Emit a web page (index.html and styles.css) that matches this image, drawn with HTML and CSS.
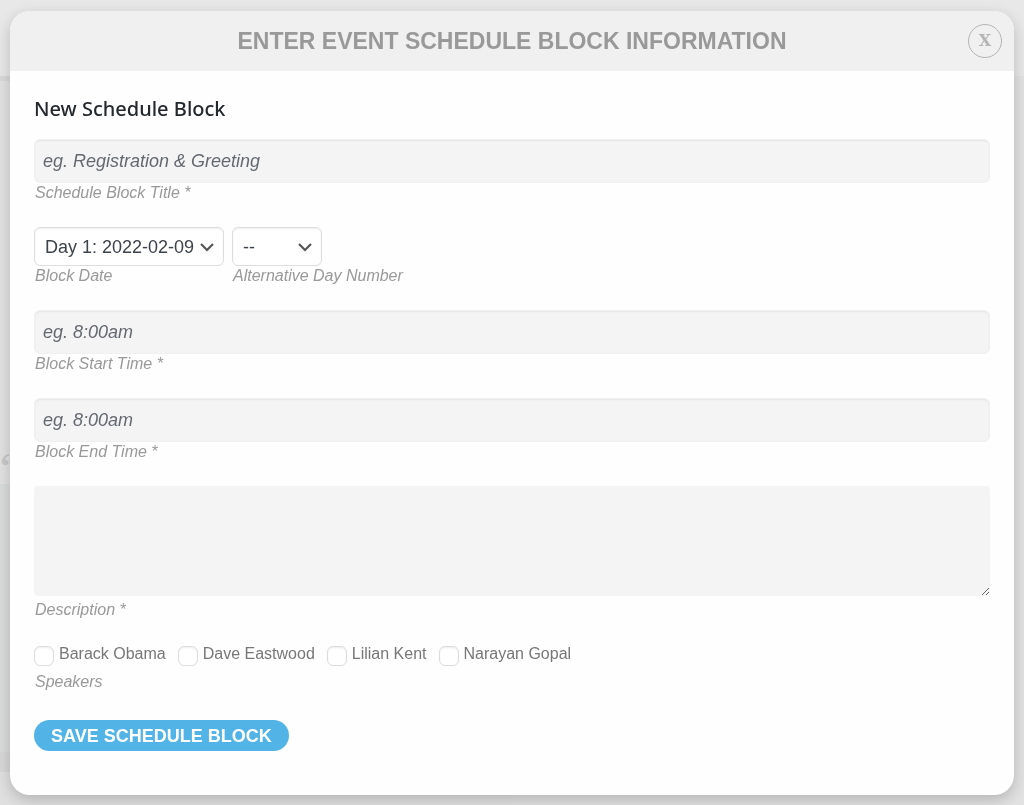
FILE: index.html
```
<!DOCTYPE html>
<html lang="en">

<head>
  <meta charset="utf-8">
  <title>Event Schedule</title>
  <link rel="stylesheet" href="styles.css">
</head>

<body>
  <div class="backdrop" aria-hidden="true"><span class="quote">&ldquo;</span></div>

  <div class="modal" role="dialog" aria-labelledby="modalTitle">
    <header class="modal-header">
      <h1 id="modalTitle">ENTER EVENT SCHEDULE BLOCK INFORMATION</h1>
      <button class="close" type="button" aria-label="Close">X</button>
    </header>

    <form class="modal-body">
      <h2>New Schedule Block</h2>

      <div class="field">
        <input class="text" id="title" type="text" placeholder="eg. Registration &amp; Greeting">
        <label class="caption" for="title">Schedule Block Title *</label>
      </div>

      <div class="row">
        <div class="field">
          <select id="date">
            <option>Day 1: 2022-02-09</option>
          </select>
          <label class="caption" for="date">Block Date</label>
        </div>
        <div class="field">
          <select class="day" id="day">
            <option>--</option>
          </select>
          <label class="caption" for="day">Alternative Day Number</label>
        </div>
      </div>

      <div class="field">
        <input class="text" id="start" type="text" placeholder="eg. 8:00am">
        <label class="caption" for="start">Block Start Time *</label>
      </div>

      <div class="field">
        <input class="text" id="end" type="text" placeholder="eg. 8:00am">
        <label class="caption" for="end">Block End Time *</label>
      </div>

      <div class="field">
        <textarea id="description"></textarea>
        <label class="caption" for="description">Description *</label>
      </div>

      <fieldset class="field" aria-labelledby="speakers">
        <div class="speakers">
          <label><input type="checkbox">Barack Obama</label>
          <label><input type="checkbox">Dave Eastwood</label>
          <label><input type="checkbox">Lilian Kent</label>
          <label><input type="checkbox">Narayan Gopal</label>
        </div>
        <span class="caption" id="speakers">Speakers</span>
      </fieldset>

      <button class="save" type="submit">SAVE SCHEDULE BLOCK</button>
    </form>
  </div>
</body>

</html>
```
FILE: styles.css
```
* {
  box-sizing: border-box;
}

body {
  margin: 0;
  padding: 11px 10px 10px;
  background: #dedede;
  color: #777777;
  font: 16px/20px "Liberation Sans", Arial, sans-serif;
}

/* the dimmed page behind the dialog */
.backdrop {
  position: fixed;
  inset: 0;
  z-index: -1;
  background:
    linear-gradient(#e0e0e0 76px, #d9d9d9 76px, #d9d9d9 81px, #e2e2e2 81px, #e2e2e2 484px, #dadddc 484px, #dadddc 752px, #d8d8d8 752px, #d8d8d8 772px, #e0e0e0 772px) left / 50% 100% no-repeat,
    linear-gradient(#e6e6e6, #e2e2e2 80px, #e2e2e2);
}

/* top strip runs the full width */
.backdrop::before {
  content: "";
  display: block;
  height: 76px;
  background: #e8e8e8;
}

.quote {
  position: absolute;
  top: 446px;
  left: 0;
  color: #c8c8c8;
  font: bold 36px/40px "Liberation Serif", serif;
}

.modal {
  background: #fefefe;
  border-radius: 20px;
  box-shadow: 0 5px 15px rgba(0, 0, 0, 0.2);
  overflow: hidden;
}

.modal-header {
  display: grid;
  grid-template-columns: 34px 1fr 34px;
  align-items: center;
  height: 60px;
  padding: 0 12px;
  background: #f0f0f0;
}

h1 {
  grid-column: 2;
  margin: 0;
  color: #999999;
  font-size: 23px;
  line-height: 28px;
  text-align: center;
}

.close {
  width: 34px;
  height: 34px;
  padding: 0;
  border: 1px solid #b4b4b4;
  border-radius: 50%;
  background: none;
  color: #b4b4b4;
  font: bold 16px/28px "DejaVu Serif", serif;
}

.modal-body {
  display: flex;
  flex-direction: column;
  align-items: flex-start;
  gap: 24px;
  padding: 24px 24px 44px;
}

h2 {
  margin: 0 0 -8px;
  color: #23282d;
  font: 500 20px/28px "Noto Sans", sans-serif;
}

.field {
  display: flex;
  flex-direction: column;
  align-items: flex-start;
  width: 100%;
  min-width: 0;
  margin: 0;
  padding: 0;
  border: 0;
}

.row {
  display: flex;
  gap: 8px;
}

.row .field {
  width: auto;
}

.caption {
  padding-left: 1px;
  color: #999999;
  font-style: italic;
}

.text {
  width: 100%;
  height: 44px;
  padding: 0 8px;
  border: 1px solid #f0f0f0;
  border-radius: 6px;
  background: #f4f4f4;
  box-shadow: inset 0 1px 2px rgba(0, 0, 0, 0.06);
  color: #444444;
  font: 18px/20px "Liberation Sans", Arial, sans-serif;
}

.text::placeholder {
  color: #646970;
  font-style: italic;
}

select {
  appearance: none;
  width: 190px;
  height: 39px;
  padding: 0 10px;
  border: 1px solid #dddddd;
  border-radius: 6px;
  background: #ffffff url("data:image/svg+xml,%3Csvg xmlns='http://www.w3.org/2000/svg' width='16' height='16' viewBox='0 0 16 16'%3E%3Cpath d='M2 5l6 6 6-6' fill='none' stroke='%23555' stroke-width='2.2'/%3E%3C/svg%3E") no-repeat right 8px center;
  box-shadow: inset 0 1px 2px rgba(0, 0, 0, 0.07);
  color: #3c434a;
  font: 18px/20px "Liberation Sans", Arial, sans-serif;
}

.day {
  width: 90px;
}

textarea {
  width: 100%;
  height: 110px;
  margin-bottom: 4px;
  padding: 8px;
  border: 0;
  border-radius: 4px;
  background: #f4f4f4;
  font: 18px/20px "Liberation Sans", Arial, sans-serif;
}

.speakers {
  display: flex;
  flex-wrap: wrap;
  gap: 12px;
  padding-bottom: 6px;
}

.speakers label {
  display: flex;
  gap: 5px;
}

.speakers input {
  appearance: none;
  width: 20px;
  height: 20px;
  margin: 2px 0 0;
  border: 1px solid #dddddd;
  border-radius: 6px;
  background: #ffffff;
  box-shadow: inset 0 1px 2px rgba(0, 0, 0, 0.07);
}

.save {
  height: 31px;
  margin-top: 4px;
  padding: 0 17px;
  border: 0;
  border-radius: 16px;
  background: #52b3e6;
  color: #ffffff;
  font: bold 18px/20px "Liberation Sans", Arial, sans-serif;
}
```
